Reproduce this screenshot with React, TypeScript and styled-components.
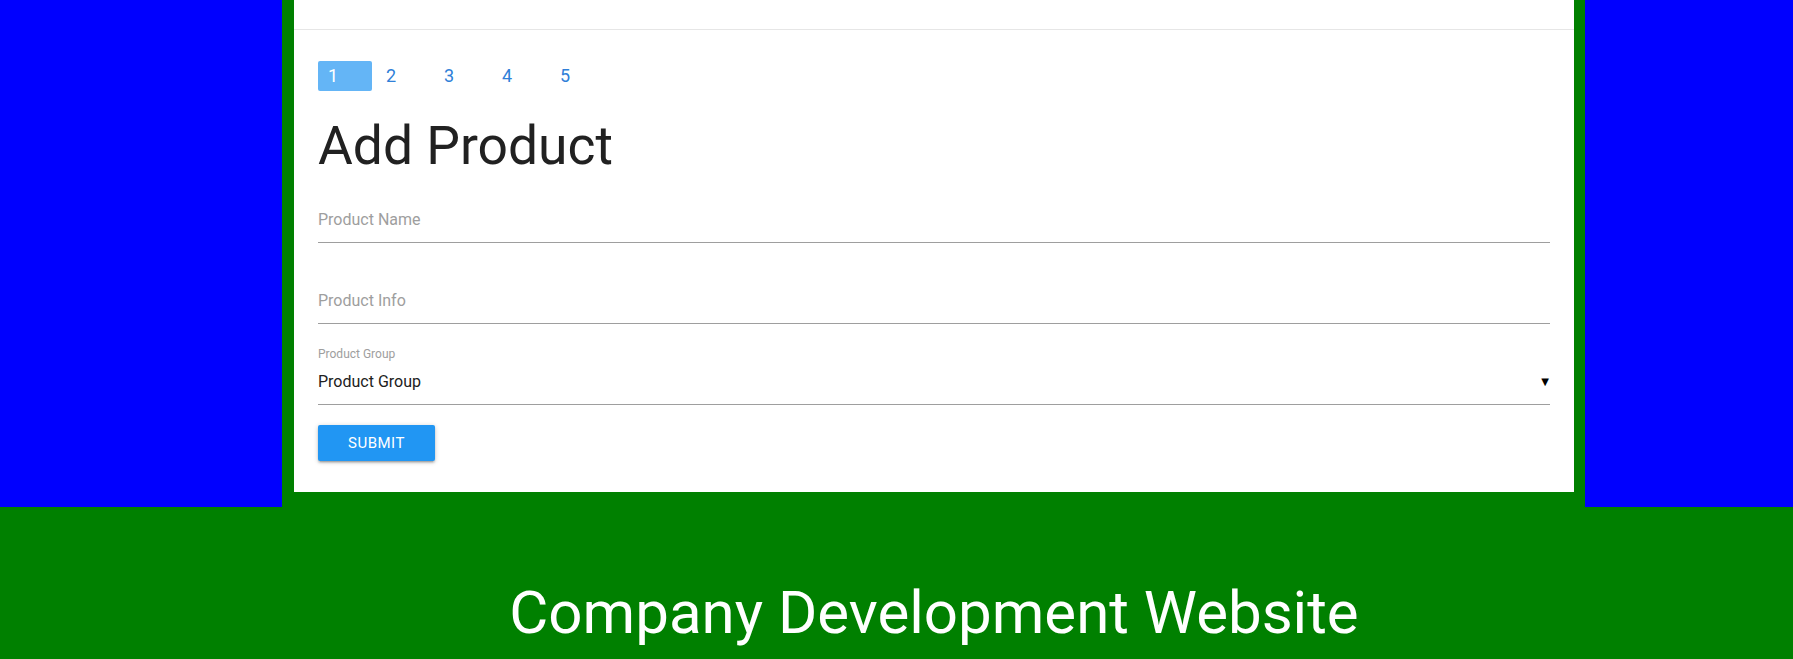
import React from "react";
import styled, { createGlobalStyle } from "styled-components";

const GlobalStyle = createGlobalStyle`
  html, body {
    margin: 0;
    padding: 0;
  }
  body {
    background: #008000;
    font-family: Roboto, "Noto Sans", Arial, sans-serif;
    color: rgba(0, 0, 0, 0.87);
  }
`;

const Page = styled.div`
  display: grid;
  grid-template-columns: 282px 1fr 208px;
  grid-template-rows: auto 1fr;
  min-height: 659px;
  background: #008000;
`;

const Aside = styled.aside<{ $col: number }>`
  grid-row: 1;
  grid-column: ${(p) => p.$col};
  background: #0000ff;
`;

const Main = styled.main`
  grid-row: 1;
  grid-column: 2;
  padding: 0 11px 15px 12px;
`;

const Card = styled.section`
  background: #ffffff;
`;

const CardTop = styled.div`
  height: 29px;
  border-bottom: 1px solid #e6e6e6;
`;

const CardBody = styled.div`
  display: flex;
  flex-direction: column;
  padding: 31px 24px 31px;
`;

const Pagination = styled.ul`
  display: flex;
  gap: 4px;
  list-style: none;
  margin: 0;
  padding: 0;
  height: 30px;
`;

const PageItem = styled.li<{ $active?: boolean }>`
  width: 54px;
  height: 30px;
  border-radius: 2px;
  background: ${(p) => (p.$active ? "#64b5f6" : "transparent")};
`;

const PageLink = styled.a<{ $active?: boolean }>`
  display: block;
  padding: 0 10px;
  font-size: 18px;
  line-height: 30px;
  color: ${(p) => (p.$active ? "#ffffff" : "#2f80d8")};
  text-decoration: none;
`;

const Title = styled.h3`
  margin: 24px 0 20px;
  font-size: 53.4px;
  line-height: 62px;
  font-weight: 400;
  color: #212121;
`;

const Form = styled.form`
  display: flex;
  flex-direction: column;
`;

const Field = styled.div<{ $gap: number }>`
  display: flex;
  flex-direction: column;
  margin-top: ${(p) => p.$gap}px;
`;

const TextInput = styled.input`
  display: block;
  box-sizing: content-box;
  width: 100%;
  height: 45px;
  padding: 0;
  margin: 0;
  border: none;
  border-bottom: 1px solid #9e9e9e;
  border-radius: 0;
  outline: none;
  background: transparent;
  font-family: Roboto, "Noto Sans", Arial, sans-serif;
  font-size: 16px;
  color: #212121;

  &::placeholder {
    color: #9e9e9e;
  }
`;

const SmallLabel = styled.label`
  display: block;
  font-size: 12px;
  line-height: 12px;
  margin-bottom: -1px;
  color: #9e9e9e;
`;

const SelectBox = styled.div`
  display: flex;
  align-items: center;
  justify-content: space-between;
  height: 45px;
  border-bottom: 1px solid #9e9e9e;
  font-size: 16px;
  line-height: 45px;
  color: #212121;
  cursor: pointer;
`;

const Caret = styled.span`
  font-family: "DejaVu Sans", sans-serif;
  font-size: 10px;
  line-height: 10px;
  color: #000000;
  margin-right: 1px;
`;

const SubmitButton = styled.button`
  align-self: flex-start;
  margin-top: 20px;
  height: 36px;
  padding: 0 30px;
  border: none;
  border-radius: 2px;
  background: #2196f3;
  color: #ffffff;
  font-family: Roboto, "Noto Sans", Arial, sans-serif;
  font-size: 15px;
  line-height: 36px;
  letter-spacing: 0.5px;
  text-transform: uppercase;
  cursor: pointer;
  box-shadow: 0 2px 2px 0 rgba(0, 0, 0, 0.14), 0 3px 1px -2px rgba(0, 0, 0, 0.12),
    0 1px 5px 0 rgba(0, 0, 0, 0.2);
`;

const Footer = styled.footer`
  grid-row: 2;
  grid-column: 2;
  padding: 73px 11px 0 12px;
`;

const FooterTitle = styled.h3`
  margin: 0;
  text-align: center;
  font-size: 60px;
  line-height: 110%;
  font-weight: 400;
  color: #ffffff;
`;

const pages = [1, 2, 3, 4, 5];

export default function App() {
  return (
    <>
      <GlobalStyle />
      <Page>
        <Aside $col={1} />
        <Main>
          <Card>
            <CardTop />
            <CardBody>
              <Pagination>
                {pages.map((n) => (
                  <PageItem key={n} $active={n === 1}>
                    <PageLink href="#" $active={n === 1}>
                      {n}
                    </PageLink>
                  </PageItem>
                ))}
              </Pagination>
              <Title>Add Product</Title>
              <Form onSubmit={(e) => e.preventDefault()}>
                <Field $gap={0}>
                  <TextInput placeholder="Product Name" />
                </Field>
                <Field $gap={35}>
                  <TextInput placeholder="Product Info" />
                </Field>
                <Field $gap={24}>
                  <SmallLabel>Product Group</SmallLabel>
                  <SelectBox>
                    <span>Product Group</span>
                    <Caret>▼</Caret>
                  </SelectBox>
                </Field>
                <SubmitButton type="submit">Submit</SubmitButton>
              </Form>
            </CardBody>
          </Card>
        </Main>
        <Aside $col={3} />
        <Footer>
          <FooterTitle>Company Development Website</FooterTitle>
        </Footer>
      </Page>
    </>
  );
}
